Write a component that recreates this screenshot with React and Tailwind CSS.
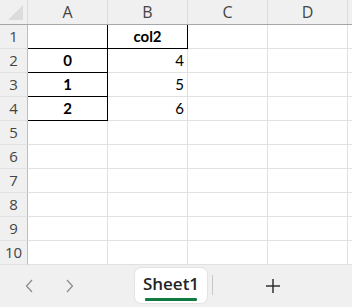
import React from "react";

const cols = ["A", "B", "C", "D"];

function Cell({ children, right, bottom, align = "center", bold }) {
  const r = right ? "border-r-black" : "border-r-[#e1e1e1]";
  const b = bottom ? "border-b-black" : "border-b-[#e1e1e1]";
  const al = align === "right" ? "justify-end pr-[3px]" : "justify-center";
  return (
    <div
      className={`w-[80px] h-full shrink-0 border-r border-b flex items-center ${r} ${b} ${al} ${bold ? "font-bold" : ""}`}
    >
      {children}
    </div>
  );
}

export default function App() {
  const data = [
    { n: 1, a: "", b: "col2", aR: true, aB: true, bR: true, bB: true, bBold: true, bAlign: "center" },
    { n: 2, a: "0", b: "4", aR: true, aB: true },
    { n: 3, a: "1", b: "5", aR: true, aB: true },
    { n: 4, a: "2", b: "6", aR: true, aB: true },
  ];
  const rows = [];
  for (let i = 1; i <= 10; i++) {
    const d = data.find((x) => x.n === i);
    rows.push(
      <div key={i} className="flex h-[24px]">
        <div className="w-[28px] shrink-0 h-full bg-[#f0f0f0] border-r border-b border-r-[#bdbdbd] border-b-[#e1e1e1] flex items-center justify-center text-[15px] text-[#444] font-['Open_Sans',sans-serif]">
          {i}
        </div>
        <Cell right={d?.aR} bottom={d?.aB} bold>
          {d?.a}
        </Cell>
        <Cell right={d?.bR} bottom={d?.bB} bold={d?.bBold} align={d?.bAlign || "right"}>
          {d?.b}
        </Cell>
        <Cell />
        <Cell />
        <div className="w-[4px] h-full shrink-0 border-b border-b-[#e1e1e1]" />
      </div>
    );
  }
  return (
    <div className="w-[352px] h-[307px] overflow-hidden bg-white flex flex-col font-['Lato','Liberation_Sans',sans-serif] text-[15px] text-black">
      <div className="flex h-[25px] bg-[#f0f0f0] border-b border-b-[#a6a6a6]">
        <div className="w-[28px] shrink-0 h-full border-r border-r-[#dcdcdc] relative">
          <svg width="27" height="24" className="absolute left-0 top-0">
            <polygon points="8,20 23,20 23,5" fill="#dcdcdc" />
          </svg>
        </div>
        {cols.map((c) => (
          <div
            key={c}
            className="w-[80px] shrink-0 h-full border-r border-r-[#dcdcdc] flex items-center justify-center text-[16px] text-[#444] font-['Open_Sans',sans-serif]"
          >
            {c}
          </div>
        ))}
      </div>
      {rows}
      <div className="flex-1 bg-[#f0f0f0] relative flex items-start">
        <div className="w-[135px] shrink-0 h-full flex items-center">
          <svg width="8" height="14" className="ml-[25px]" viewBox="0 0 8 14">
            <polyline points="7,1 1.5,7 7,13" fill="none" stroke="#8a8a8a" strokeWidth="1.2" />
          </svg>
          <svg width="8" height="14" className="ml-[33px]" viewBox="0 0 8 14">
            <polyline points="1,1 6.5,7 1,13" fill="none" stroke="#8a8a8a" strokeWidth="1.2" />
          </svg>
        </div>
        <div className="mt-[3px] w-[72px] h-[35px] bg-white rounded-[6px] shadow-[0_0_0_1px_#e4e4e4] flex flex-col items-center pt-[4px]">
          <span className="font-['Open_Sans',sans-serif] font-semibold text-[17px] leading-[24px] text-[#242424]">Sheet1</span>
          <div className="w-[52px] h-[3px] bg-[#107c41] mt-[2px] rounded-[1px]" />
        </div>
        <div className="ml-[5px] mt-[10px] w-[1px] h-[20px] bg-[#c8c8c8]" />
        <div className="flex-1 h-full flex items-center justify-center pr-[20px]">
          <svg width="16" height="16" viewBox="0 0 16 16">
            <line x1="8" y1="1" x2="8" y2="15" stroke="#242424" strokeWidth="1.4" />
            <line x1="1" y1="8" x2="15" y2="8" stroke="#242424" strokeWidth="1.4" />
          </svg>
        </div>
      </div>
    </div>
  );
}
